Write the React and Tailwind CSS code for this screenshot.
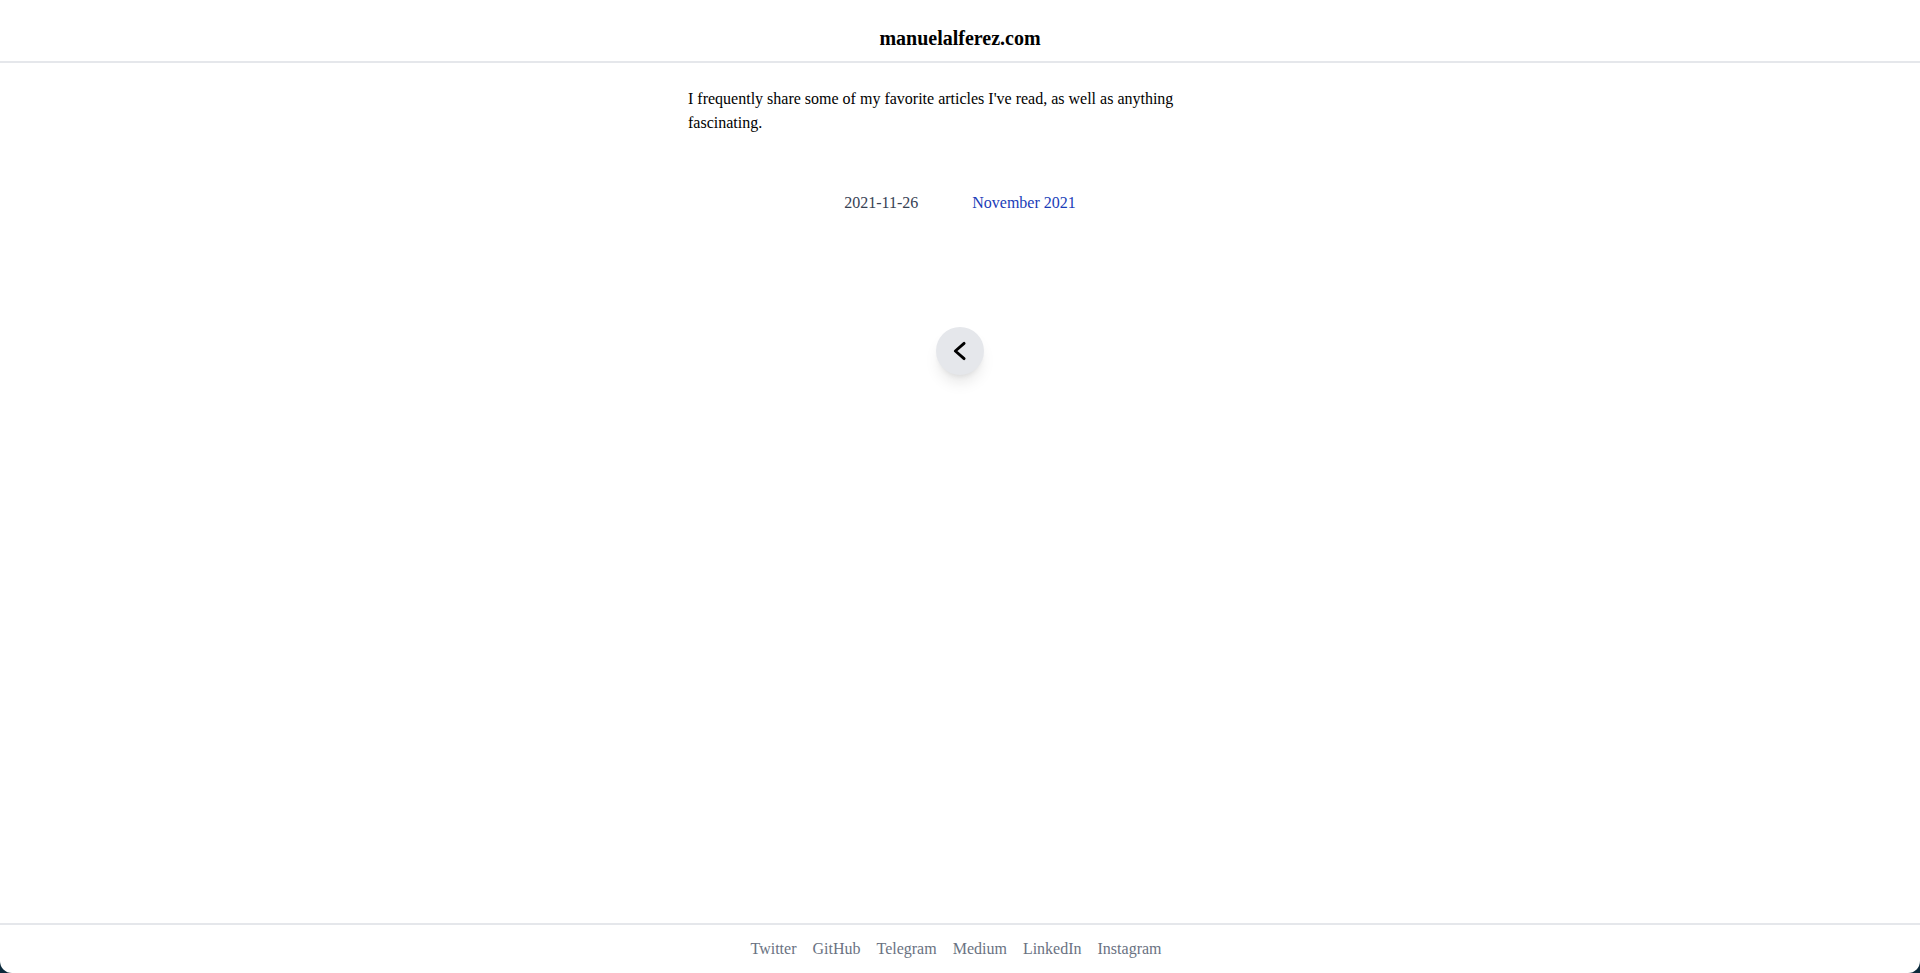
import React from 'react';

const links = ['Twitter', 'GitHub', 'Telegram', 'Medium', 'LinkedIn', 'Instagram'];

const App = () => {
  return (
    <div className="h-screen bg-[#0c2a3c]" style={{ fontFamily: '"Liberation Serif", "Times New Roman", serif' }}>
      <div className="flex h-full flex-col overflow-hidden rounded-b-[12px] bg-white">
        <header className="border-b-2 border-gray-200 pt-6 pb-[9px] text-center">
          <a href="#" className="text-xl font-bold text-black">
            manuelalferez.com
          </a>
        </header>

        <main className="flex-1">
          <div className="mx-auto max-w-xl px-4">
            <p className="mt-6 text-base leading-6 text-black">
              I frequently share some of my favorite articles I've read, as well as anything fascinating.
            </p>
          </div>

          <div className="mt-14 flex justify-center gap-[54px] text-base leading-6">
            <span className="text-gray-700">2021-11-26</span>
            <a href="#" className="text-blue-800">
              November 2021
            </a>
          </div>

          <div className="mt-[112px] flex justify-center">
            <button className="flex h-12 w-12 items-center justify-center rounded-full bg-gray-200 shadow-lg">
              <svg
                xmlns="http://www.w3.org/2000/svg"
                className="h-7 w-7"
                fill="none"
                viewBox="0 0 24 24"
                stroke="black"
              >
                <path strokeLinecap="round" strokeLinejoin="round" strokeWidth={2.5} d="M15.5 5.5L8 12l7.5 6.5" />
              </svg>
            </button>
          </div>
        </main>

        <footer className="border-t-2 border-gray-200 py-3">
          <nav className="flex justify-center gap-4 pr-2 text-base leading-6 text-gray-500">
            {links.map((l) => (
              <a key={l} href="#">
                {l}
              </a>
            ))}
          </nav>
        </footer>
      </div>
    </div>
  );
};

export default App;
